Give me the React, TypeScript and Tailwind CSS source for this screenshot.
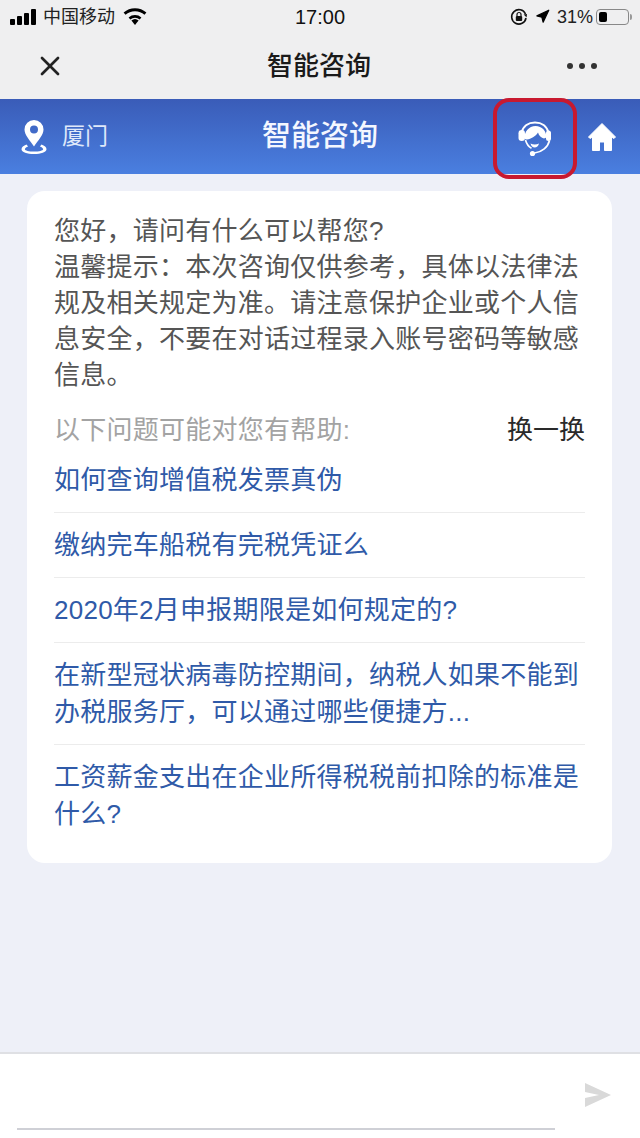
import React from 'react';
import { X, Navigation } from 'lucide-react';

const cjk = "font-['Liberation_Sans','Noto_Sans_CJK_SC',sans-serif]";

const questions = [
  '如何查询增值税发票真伪',
  '缴纳完车船税有完税凭证么',
  '2020年2月申报期限是如何规定的?',
  '在新型冠状病毒防控期间，纳税人如果不能到办税服务厅，可以通过哪些便捷方...',
  '工资薪金支出在企业所得税税前扣除的标准是什么?',
];

const StatusBar = () => (
  <div className="h-[33px] flex items-center justify-between pl-[10px] pr-[8px] relative">
    <div className="flex items-center">
      <div className="flex items-end gap-[2px] h-[16px]">
        <span className="w-[5px] h-[6px] rounded-[1px] bg-black" />
        <span className="w-[5px] h-[9px] rounded-[1px] bg-black" />
        <span className="w-[5px] h-[12px] rounded-[1px] bg-black" />
        <span className="w-[5px] h-[16px] rounded-[1px] bg-black" />
      </div>
      <span className="ml-[7px] text-[18px] leading-none text-[#222]">中国移动</span>
      <svg className="ml-[8px]" width="24" height="17" viewBox="0 0 24 17">
        <path d="M12 17l-3.6-4.4a5.6 5.6 0 0 1 7.2 0z" fill="#000" />
        <path d="M5.6 9.4a10 10 0 0 1 12.8 0l-1.7 2a7.3 7.3 0 0 0-9.4 0z" fill="#000" />
        <path d="M.6 4.6a17.2 17.2 0 0 1 22.8 0l-1.9 2.2a14.2 14.2 0 0 0-19 0z" fill="#000" />
      </svg>
    </div>
    <span className="absolute left-[295px] top-[6px] text-[20px] leading-[22px] font-medium text-[#111]">17:00</span>
    <div className="flex items-center">
      <svg width="18" height="18" viewBox="0 0 18 18" className="mr-[7px]">
        <path d="M15.5 6A7.2 7.2 0 1 0 16 10" fill="none" stroke="#111" strokeWidth="1.6" />
        <path d="M13.6 6.6l3.4-.6-.4 3.4z" fill="#111" />
        <rect x="5.8" y="8" width="6.4" height="5" rx="1" fill="#111" />
        <path d="M7 8V6.5a2 2 0 0 1 4 0V8" fill="none" stroke="#111" strokeWidth="1.2" />
      </svg>
      <Navigation size={15} fill="#000" stroke="#000" className="mr-[7px]" />
      <span className="text-[18px] leading-none text-[#222]">31%</span>
      <div className="ml-[3px] w-[33px] h-[16px] rounded-[4px] border border-[#888] p-[2px] flex">
        <span className="w-[8px] h-full rounded-[2px] bg-black" />
      </div>
      <span className="ml-[1px] w-[2px] h-[6px] rounded-r-sm bg-[#999]" />
    </div>
  </div>
);

const Pin = () => (
  <svg width="26" height="36" viewBox="0 0 26 36">
    <path fillRule="evenodd" d="M13 1a9.500 9.500 0 0 1 9.500 9.500c0 5.500-5.500 11-9.500 17-4-6-9.500-11.500-9.500-17A9.500 9.500 0 0 1 13 1zm0 5.500a4 4 0 1 0 0 8 4 4 0 0 0 0-8z" fill="#fff" />
    <path d="M5.500 25.500C2.500 26.500.5 28.300.5 30.200c0 2.900 5.600 4.800 12.500 4.800s12.500-1.900 12.500-4.800c0-1.900-2-3.700-5-4.700l-1.600 1.900c1.900.6 3.200 1.700 3.200 2.800 0 1.400-4 2.400-9.100 2.400s-9.100-1-9.100-2.400c0-1.100 1.300-2.200 3.200-2.800z" fill="#fff" />
  </svg>
);

const Headset = () => (
  <svg width="36" height="37" viewBox="0 0 36 37">
    {/* band */}
    <path d="M4.500 12C6 5 11.500 1.500 18 1.500S30 5 31.500 12" fill="none" stroke="#fff" strokeWidth="2" />
    {/* hair */}
    <path d="M7.500 18C7 10.500 12 5 18.500 5S29.500 10 29.500 16.500L27 17.500c-2.600-.5-5.200-2.900-6-6C18.500 15.500 14 18 10 18.500z" fill="#fff" />
    {/* ear pads */}
    <rect x="1.500" y="9" width="6.500" height="11" rx="3.200" fill="#fff" />
    <rect x="29" y="9.500" width="5" height="10.500" rx="2.500" fill="#fff" />
    {/* cheek + smile */}
    <path d="M8.500 19c1 3.800 3.300 6.800 6 8.200" fill="none" stroke="#fff" strokeWidth="1.600" />
    <path d="M13.500 22.500c2.500 1.300 6 1.300 8.500 0-.6 2.600-2.300 4-4.300 4s-3.600-1.400-4.200-4z" fill="#fff" />
    {/* mic */}
    <path d="M32.500 19.500c-1.500 6.500-7.500 11.500-15 12.500" fill="none" stroke="#fff" strokeWidth="1.700" />
    <circle cx="15.500" cy="32.500" r="2.600" fill="#fff" />
  </svg>
);

const Home = () => (
  <svg width="30" height="30" viewBox="0 0 30 30">
    <path d="M15 1.500L1.500 15l1.500 1.500L5.500 15v13.500h7V20h5v8.500h7V15l2.500 1.500L28.500 15z" fill="#fff" stroke="#fff" strokeLinejoin="round" />
  </svg>
);

export default function App() {
  return (
    <div className={`w-[640px] h-[1138px] flex flex-col bg-[#eef0f8] overflow-hidden ${cjk}`}>
      <div className="bg-[#efeff0] h-[99px] shrink-0">
        <StatusBar />
        {/* wechat nav */}
        <div className="h-[66px] flex items-center justify-between pl-[34px] pr-[43px] relative">
          <X size={32} strokeWidth={2} className="text-[#222]" />
          <span className="absolute inset-x-0 text-center text-[26px] leading-none font-medium text-[#1a1a1a] pr-[2px]">智能咨询</span>
          <div className="flex gap-[6px]">
            <span className="w-[6px] h-[6px] rounded-full bg-[#333]" />
            <span className="w-[6px] h-[6px] rounded-full bg-[#333]" />
            <span className="w-[6px] h-[6px] rounded-full bg-[#333]" />
          </div>
        </div>
      </div>

      {/* blue header */}
      <div className="h-[75px] shrink-0 bg-gradient-to-b from-[#3a5cb8] to-[#4a7fe0] flex items-center relative pl-[21px] pr-[23px]">
        <Pin />
        <span className="ml-[15px] text-[23px] leading-none text-[#dfe8fa]">厦门</span>
        <span className="absolute inset-x-0 text-center text-[29px] leading-none font-medium text-[#f4f7ff]">智能咨询</span>
        <div className="ml-auto flex items-center">
          <div className="w-[84px] h-[81px] mb-[-4px] rounded-[16px] border-[4px] border-[#c8192f] flex items-center justify-center pt-[2px]">
            <Headset />
          </div>
          <div className="ml-[10px]"><Home /></div>
        </div>
      </div>

      <div className="flex-1 pl-[27px] pr-[28px] pt-[17px]">
        <div className="bg-white rounded-[18px] h-[672px] pl-[27px] pr-[27px] pt-[22px]">
          <p className="text-[26px] leading-[36px] tracking-[0.25px] text-[#555]">
            您好，请问有什么可以帮您?
            <br />
            温馨提示：本次咨询仅供参考，具体以法律法规及相关规定为准。请注意保护企业或个人信息安全，不要在对话过程录入账号密码等敏感信息。
          </p>
          <div className="mt-[19px] flex items-center justify-between h-[36px]">
            <span className="text-[26px] tracking-[0.25px] text-[#a3a3a3]">以下问题可能对您有帮助:</span>
            <span className="text-[26px] text-[#2a2a2a]">换一换</span>
          </div>
          <div>
            {questions.map((q, i) => (
              <div
                key={q}
                className={`py-[13.5px] text-[26px] leading-[37px] tracking-[0.25px] text-[#2f5aa8] ${i < questions.length - 1 ? 'border-b border-[#ececec]' : ''}`}
              >
                {q}
              </div>
            ))}
          </div>
        </div>
      </div>

      {/* input bar */}
      <div className="h-[86px] shrink-0 bg-white border-t-2 border-[#dfe0e4] flex pl-[17px] pr-[28px] relative">
        <div className="w-[538px] h-[76px] border-b-2 border-[#cfd0d6]" />
        <svg className="ml-auto mt-[28px]" width="28" height="26" viewBox="0 0 28 26">
          <path d="M1 1l26 12L1 25v-9l14-3L1 10z" fill="#d9d9d9" />
        </svg>
      </div>
    </div>
  );
}
